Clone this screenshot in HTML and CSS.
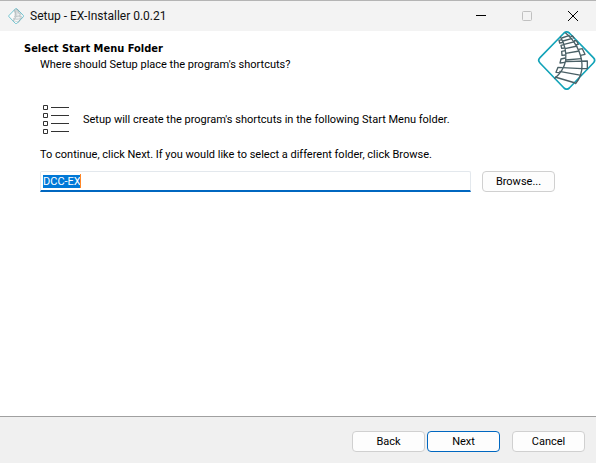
FILE: index.html
```html
<!DOCTYPE html>
<html lang="en">
<head>
<meta charset="utf-8">
<title>Setup - EX-Installer 0.0.21</title>
<link rel="stylesheet" href="styles.css">
</head>
<body>
<svg width="0" height="0" class="defs" aria-hidden="true">
  <symbol id="track" viewBox="0 2 180 180">
    <path class="edge" d="M84 11Q92 4 100 11L172 85Q180 93 172 101L100 176Q92 183 84 176L12 101Q4 93 12 85Z"/>
    <g class="rails">
      <path d="M73 22C84 41 92 68 89 94C84 119 71 135 55 148"/>
      <path d="M88 10C116 32 137 72 138 106C139 132 130 150 118 164"/>
      <path d="M77 26L101 18M81 35L109 27M84 45L117 37M87 58L124 50M89 72L130 65M89 92L136 88M88 97L154 95L154 118L138 118M79 115L138 118M70 126L136 138M57 143L118 161"/>
      <path d="M78 31L69 33L71 41L82 39M84 46L75 48L77 57L86 56M88 64L77 66L78 78L89 77M88 86L75 89L72 101L87 99M79 115L66 114L60 129L71 130M103 22L110 20L115 28M114 33L122 35L127 45L120 46M128 60L139 58L147 75L134 78"/>
    </g>
  </symbol>
</svg>
<div class="window">
  <header class="titlebar">
    <svg class="app-icon" aria-hidden="true"><use href="#track"/></svg>
    <span class="title">Setup - EX-Installer 0.0.21</span>
    <div class="controls">
      <button type="button" aria-label="Minimize"><svg viewBox="0 0 12 12"><path d="M1 5.5H11"/></svg></button>
      <button type="button" aria-label="Maximize" disabled><svg viewBox="0 0 12 12"><rect x="1.5" y="1.5" width="9" height="9" rx="1"/></svg></button>
      <button type="button" aria-label="Close"><svg viewBox="0 0 12 12"><path d="M1 1L11 11M11 1L1 11"/></svg></button>
    </div>
  </header>
  <section class="banner">
    <div class="heading">
      <h1>Select Start Menu Folder</h1>
      <p>Where should Setup place the program's shortcuts?</p>
    </div>
    <svg class="logo" role="img" aria-label="DCC-EX"><use href="#track"/></svg>
  </section>
  <main>
    <div class="intro">
      <svg class="list-icon" viewBox="0 0 27 29" aria-hidden="true"><path d="M1.5 .5h4v4h-4zM1.5 8.5h4v4h-4zM1.5 16.5h4v4h-4zM1.5 24.5h4v4h-4zM9 2.5h18M9 10.5h18M9 18.5h18M9 26.5h18"/></svg>
      <p>Setup will create the program's shortcuts in the following Start Menu folder.</p>
    </div>
    <label for="folder">To continue, click Next. If you would like to select a different folder, click Browse.</label>
    <div class="picker">
      <div class="field"><input id="folder" type="text" value="DCC-EX" autofocus></div>
      <button type="button" class="btn">Browse...</button>
    </div>
  </main>
  <footer>
    <button type="button" class="btn">Back</button>
    <button type="button" class="btn primary">Next</button>
    <button type="button" class="btn cancel">Cancel</button>
  </footer>
</div>
<script src="script.js"></script>
</body>
</html>
```
FILE: styles.css
```css
* { box-sizing: border-box; }
body { margin: 0; background: #fff; color: #000; font: 11px/14px Roboto, sans-serif; }
h1, p { margin: 0; font-size: 11px; line-height: 14px; }
h1 { font-family: "DejaVu Sans Condensed", sans-serif; }
.defs { position: absolute; }
.window { display: flex; flex-direction: column; min-height: 100vh; }
.titlebar { display: flex; align-items: center; height: 31px; padding-left: 8px; background: #f3f3f3; border-top: 1px solid #b4b4b4; }
.app-icon { width: 16px; height: 16px; opacity: .65; --edge: 10; }
.title { margin-left: 6px; font: 12px/16px Roboto, sans-serif; color: #111; }
.controls { display: flex; height: 100%; margin-left: auto; }
.controls button { display: grid; place-items: center; width: 46px; padding: 0; border: 0; background: none; }
.controls svg { width: 12px; height: 12px; fill: none; stroke: #000; }
.controls button:disabled svg { stroke: #c0c0c0; }
.edge { fill: #fff; stroke: #12a3b8; stroke-width: var(--edge, 5); }
.rails { fill: none; stroke: #4a6066; stroke-width: 4; stroke-linejoin: round; }
.banner { display: flex; justify-content: space-between; align-items: flex-start; height: 58px; padding-left: 24px; }
.heading { padding-top: 11px; }
.heading p { margin: 2px 0 0 16px; }
.logo { flex: none; width: 60px; height: 60px; margin-top: -1px; }
main { flex: 1; padding: 16px 41px 0 40px; }
.intro { display: flex; align-items: center; gap: 14px; height: 29px; padding-left: 2px; }
.list-icon { flex: none; width: 27px; height: 29px; fill: none; stroke: #333; }
label { display: block; margin-top: 14px; }
.picker { display: flex; gap: 11px; margin-top: 9px; }
.field { position: relative; flex: 1; }
.field::after { content: ""; position: absolute; left: 40px; top: 3px; width: 1px; height: 14px; background: #ff8728; }
input { display: block; width: 100%; height: 21px; padding: 0 2px; border: 1px solid #e3e8ed; border-bottom: 2px solid #0067c0; border-radius: 2px 2px 0 0; outline: 0; font: inherit; color: #000; }
input::selection { background: #0078d7; color: #fff; }
.btn { width: 73px; height: 21px; padding: 0; border: 1px solid #d0d0d0; border-radius: 4px; background: #fdfdfd; color: #000; font: inherit; }
.primary { border-color: #0067c0; }
footer { display: flex; justify-content: flex-end; align-items: flex-start; gap: 2px; height: 47px; padding: 14px 11px 0 0; background: #f0f0f0; border-top: 1px solid #a0a0a0; }
.cancel { margin-left: 10px; }
```
FILE: script.js
```js
const folder = document.getElementById("folder");
folder.focus();
folder.select();
```
